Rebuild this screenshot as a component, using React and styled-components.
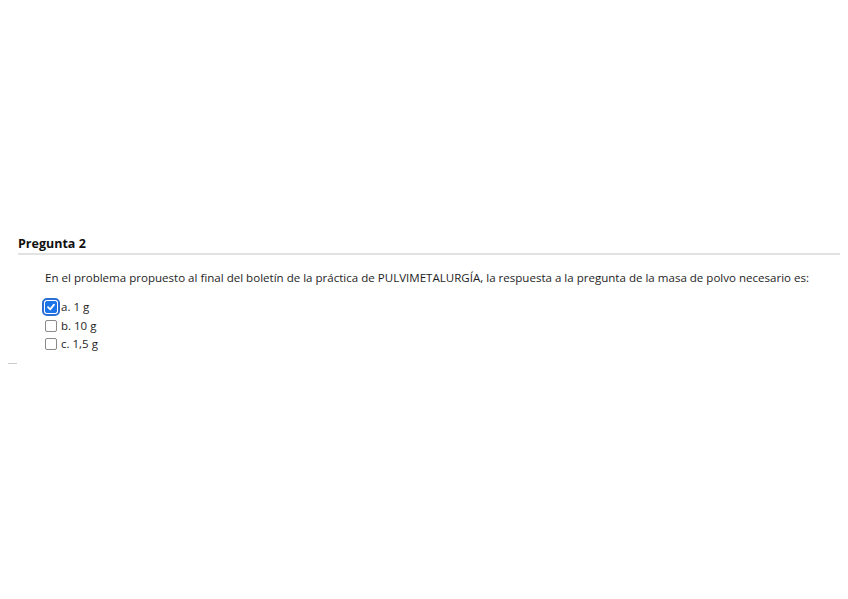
import React from 'react';
import styled, { createGlobalStyle } from 'styled-components';

const GlobalStyle = createGlobalStyle`
  body {
    margin: 0;
    background: #fff;
    font-family: "Open Sans", "Liberation Sans", sans-serif;
    color: #1a1a1a;
  }
`;

const Page = styled.div`
  width: 848px;
  height: 599px;
  padding-top: 235px;
  box-sizing: border-box;
`;

const Question = styled.div`
  margin: 0 8px 0 18px;
`;

const Title = styled.h3`
  margin: 0;
  font-size: 12.5px;
  font-weight: 700;
  line-height: 17px;
  padding-bottom: 1px;
  border-bottom: 2px solid #e2e2e2;
  color: #111;
`;

const Body = styled.div`
  padding: 14px 0 0 27px;
`;

const Text = styled.p`
  margin: 0 0 12px;
  font-size: 11.55px;
  line-height: 17px;
  color: #1e1e1e;
`;

const Options = styled.div`
  display: flex;
  flex-direction: column;
`;

const Option = styled.label`
  display: flex;
  align-items: center;
  gap: 4px;
  font-size: 11.5px;
  line-height: 18.5px;
  color: #1e1e1e;
`;

const Box = styled.span`
  width: 12px;
  height: 12px;
  box-sizing: border-box;
  border-radius: 2px;
  border: 1px solid ${p => (p.checked ? '#1a73e8' : '#8a8a8a')};
  background: ${p => (p.checked ? '#1a73e8' : '#fff')};
  outline: ${p => (p.checked ? '2px solid #2b6fd6' : 'none')};
  outline-offset: 1px;
  display: flex;
  align-items: center;
  justify-content: center;
`;

const Dash = styled.div`
  width: 9px;
  height: 1px;
  background: #ccc;
  margin: 9px 0 0 8px;
`;

const options = [
  { label: 'a. 1 g', checked: true },
  { label: 'b. 10 g', checked: false },
  { label: 'c. 1,5 g', checked: false },
];

const App = () => (
  <Page>
    <GlobalStyle />
    <Question>
      <Title>Pregunta 2</Title>
      <Body>
        <Text>
          En el problema propuesto al final del boletín de la práctica de PULVIMETALURGÍA, la respuesta a la pregunta de la masa de polvo necesario es:
        </Text>
        <Options>
          {options.map(o => (
            <Option key={o.label}>
              <Box checked={o.checked}>
                {o.checked && (
                  <svg width="10" height="10" viewBox="0 0 10 10">
                    <path d="M2 5.2 L4.2 7.4 L8 2.6" stroke="#fff" strokeWidth="1.8" fill="none" strokeLinecap="round" strokeLinejoin="round" />
                  </svg>
                )}
              </Box>
              {o.label}
            </Option>
          ))}
        </Options>
      </Body>
    </Question>
    <Dash />
  </Page>
);

export default App;
